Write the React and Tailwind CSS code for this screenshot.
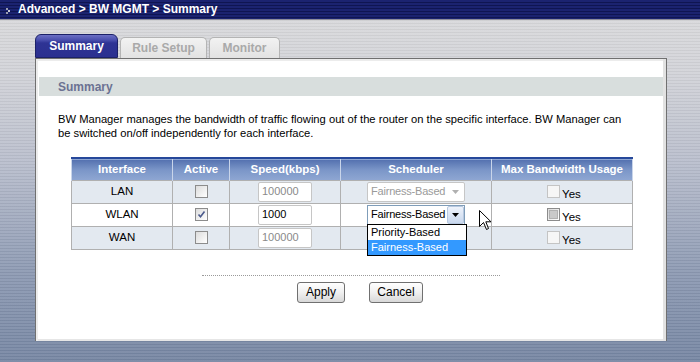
import React from "react";

const B = "font-['Liberation_Sans',Tahoma,Arial,sans-serif] font-bold";
const T = "font-['Liberation_Sans',Tahoma,Arial,sans-serif]";

function Check({ checked, disabled, pressed }) {
  return (
    <div
      className={`w-[13px] h-[13px] border flex items-center justify-center ${
        disabled
          ? "border-[#c4c4c4] bg-[#f6f6f6]"
          : "border-[#8c8c8c] bg-[linear-gradient(135deg,#dcdcdc,#ffffff)]"
      }`}
    >
      {pressed && <div className="w-[9px] h-[9px] bg-[#c9c9c9] border border-[#b0b0b0]" />}
      {checked && (
        <svg width="9" height="9" viewBox="0 0 9 9">
          <path d="M1.5 4.5 L3.5 6.8 L7.5 1.5" fill="none" stroke="#4b5a8c" strokeWidth="1.6" />
        </svg>
      )}
    </div>
  );
}

function SpeedInput({ value, dim }) {
  return (
    <div
      className={`w-[54px] h-[20px] mx-auto border border-[#c6c6c6] rounded-[2px] bg-white flex items-center pl-[3px] text-[11px] ${T} ${
        dim ? "text-[#8a8a8a]" : "text-black"
      }`}
    >
      {value}
    </div>
  );
}

function Select({ disabled, open }) {
  return (
    <div className="relative w-[98px] h-[20px] mx-auto">
      <div
        className={`w-full h-full flex items-center bg-white border ${
          disabled ? "border-[#c6c6c6] rounded-[2px]" : "border-[#7f9db9]"
        }`}
      >
        <span
          className={`flex-1 pl-[3px] text-[11px] whitespace-nowrap overflow-hidden text-left tracking-[-0.2px] ${T} ${
            disabled ? "text-[#9a9a9a]" : "text-black"
          }`}
        >
          Fairness-Based
        </span>
        {disabled ? (
          <div className="w-[17px] h-full flex items-center justify-center shrink-0">
            <svg width="7" height="4" viewBox="0 0 7 4">
              <path d="M0 0 H7 L3.5 4 Z" fill="#b0b0b0" />
            </svg>
          </div>
        ) : (
          <div className="w-[17px] h-[18px] shrink-0 border border-[#b7c8e0] bg-[linear-gradient(#eef3fb,#c9d8ee)] rounded-[2px] flex items-center justify-center">
            <svg width="7" height="4" viewBox="0 0 7 4">
              <path d="M0 0 H7 L3.5 4 Z" fill="#000" />
            </svg>
          </div>
        )}
      </div>
      {open && (
        <div className={`absolute left-0 top-[19px] w-[100px] border border-black bg-white text-[11px] text-left whitespace-nowrap ${T} z-10`}>
          <div className="h-[15px] leading-[15px] pl-[3px] text-black">Priority-Based</div>
          <div className="h-[15px] leading-[15px] pl-[3px] text-white bg-[#3399ff]">Fairness-Based</div>
        </div>
      )}
    </div>
  );
}

function Row({ name, shade, speed, dimSpeed, active, disabledSel, open, pressed }) {
  const td = "border border-[#b0b0b0] text-center align-middle p-0";
  return (
    <tr className={`h-[23px] ${shade ? "bg-[#e3e9f0]" : "bg-white"}`}>
      <td className={`${td} text-[11.5px] ${T} text-black`}>{name}</td>
      <td className={td}>
        <div className="flex justify-center">
          <Check checked={active} />
        </div>
      </td>
      <td className={td}>
        <SpeedInput value={speed} dim={dimSpeed} />
      </td>
      <td className={td}>
        <Select disabled={disabledSel} open={open} />
      </td>
      <td className={td}>
        <div className="flex items-end justify-center gap-[2px] pl-[4px]">
          <Check disabled={!pressed} pressed={pressed} />
          <span className={`text-[11.5px] ${T} text-black leading-[12px] translate-y-[2px]`}>Yes</span>
        </div>
      </td>
    </tr>
  );
}

export default function App() {
  const th = `border-l border-r border-[#c9d5ea] text-white text-[11.5px] whitespace-nowrap ${B} text-center p-0`;
  return (
    <div className="relative w-[700px] h-[362px] overflow-hidden bg-[repeating-linear-gradient(180deg,rgba(255,255,255,0.07)_0px,rgba(255,255,255,0.07)_2px,rgba(0,0,0,0.04)_2px,rgba(0,0,0,0.04)_3px),linear-gradient(180deg,#dadadc_0%,#d2d3d8_20%,#b8bdcc_45%,#8c99b2_75%,#7585a2_100%)]">
      {/* Header bar */}
      <div className="h-[20px] border-b border-[#8e8e9c] bg-[repeating-linear-gradient(180deg,#1b2370_0px,#1b2370_2px,#0f1552_2px,#0f1552_3px)] flex items-center">
        <svg width="18" height="19" viewBox="0 0 18 19" className="shrink-0">
          <rect x="6" y="8" width="2" height="2" fill="#9a9cb0" />
          <rect x="8" y="10" width="2" height="2" fill="#c8c9d6" />
          <rect x="6" y="12" width="2" height="2" fill="#9a9cb0" />
        </svg>
        <span className={`text-white text-[12px] ${B} leading-none -mt-[1px]`}>
          Advanced &gt; BW MGMT &gt; Summary
        </span>
      </div>

      <div className="pl-[35px] pt-[14px]">
        {/* Tabs */}
        <div className="flex items-end h-[24px] gap-[2px]">
          <div className={`w-[83px] h-[24px] rounded-t-[6px] border border-[#1c2168] bg-[linear-gradient(180deg,#6b6fc4_0px,#4a4fae_5px,#2e3394_8px,#2b3090_100%)] flex items-center justify-center text-white text-[12px] ${B}`}>
            Summary
          </div>
          <div className={`w-[87px] h-[21px] rounded-t-[5px] border border-b-0 border-[#b4b4b4] bg-[linear-gradient(180deg,#f2f2f2,#e2e2e2)] flex items-center justify-center text-[#a9a9a9] text-[12px] ${B}`}>
            Rule Setup
          </div>
          <div className={`w-[71px] h-[21px] rounded-t-[5px] border border-b-0 border-[#b4b4b4] bg-[linear-gradient(180deg,#f2f2f2,#e2e2e2)] flex items-center justify-center text-[#a9a9a9] text-[12px] ${B}`}>
            Monitor
          </div>
        </div>

        {/* Panel */}
        <div className="w-[632px] h-[283px] border border-b-0 border-[#707070] bg-white shadow-[inset_-3px_0_0_#e2e2e2,inset_2px_2px_0_#ececec,inset_0_-2px_0_#e6e6e6] pl-[3px] pr-[3px] pt-[18px]">
          <div className={`h-[19px] bg-[#d8dedd] flex items-center pl-[19px] text-[#6b7292] text-[12px] ${B}`}>
            Summary
          </div>
          <p className={`mt-[16px] pl-[19px] text-[11.2px] leading-[14px] text-black whitespace-nowrap ${T}`}>
            BW Manager manages the bandwidth of traffic flowing out of the router on the specific interface. BW Manager can
            <br />
            be switched on/off independently for each interface.
          </p>

          <table className="mt-[17px] ml-[32px] border-collapse w-[561px] table-fixed">
            <colgroup>
              <col className="w-[101px]" />
              <col className="w-[57px]" />
              <col className="w-[111px]" />
              <col className="w-[151px]" />
              <col className="w-[141px]" />
            </colgroup>
            <thead>
              <tr className="h-[22px] bg-[linear-gradient(180deg,#5572b0,#7b96c8_50%,#8ea6d2)] border-t-2 border-t-[#26489a]">
                <th className={th}>Interface</th>
                <th className={th}>Active</th>
                <th className={th}>Speed(kbps)</th>
                <th className={th}>Scheduler</th>
                <th className={th}>Max Bandwidth Usage</th>
              </tr>
            </thead>
            <tbody>
              <Row name="LAN" shade speed="100000" dimSpeed disabledSel />
              <Row name="WLAN" speed="1000" active open pressed />
              <Row name="WAN" shade speed="100000" dimSpeed disabledSel />
            </tbody>
          </table>

          <div className="mt-[25px] ml-[163px] w-[298px] border-t border-dotted border-[#9a9a9a]" />

          <div className="mt-[6px] pl-[258px] flex gap-[24px]">
            <button className={`w-[48px] h-[21px] rounded-[3px] border border-[#707070] bg-[linear-gradient(180deg,#ffffff,#f0f0f0_50%,#d8d8d8)] text-[12px] text-black ${T} flex items-center justify-center`}>
              Apply
            </button>
            <button className={`w-[54px] h-[21px] rounded-[3px] border border-[#707070] bg-[linear-gradient(180deg,#ffffff,#f0f0f0_50%,#d8d8d8)] text-[12px] text-black ${T} flex items-center justify-center`}>
              Cancel
            </button>
          </div>
        </div>
      </div>

      {/* Mouse pointer */}
      <svg className="absolute left-[479px] top-[210px]" width="13" height="21" viewBox="0 0 13 21">
        <path
          d="M0.5 0.5 L0.5 16.5 L4.5 12.5 L7.5 19.5 L9.5 18.5 L6.8 11.8 L12 11.8 Z"
          fill="#fff"
          stroke="#000"
          strokeWidth="1"
          strokeLinejoin="miter"
        />
      </svg>
    </div>
  );
}
